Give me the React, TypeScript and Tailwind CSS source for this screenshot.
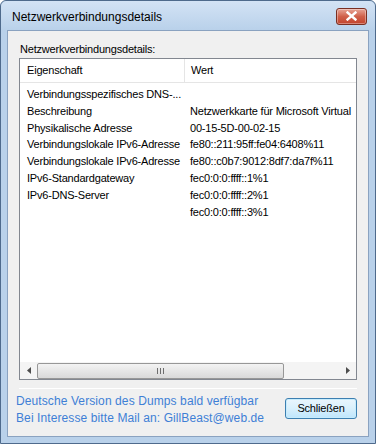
import React from 'react';

const rows: [string, string][] = [
  ['Verbindungsspezifisches DNS-...', ''],
  ['Beschreibung', 'Netzwerkkarte für Microsoft Virtual'],
  ['Physikalische Adresse', '00-15-5D-00-02-15'],
  ['Verbindungslokale IPv6-Adresse', 'fe80::211:95ff:fe04:6408%11'],
  ['Verbindungslokale IPv6-Adresse', 'fe80::c0b7:9012:8df7:da7f%11'],
  ['IPv6-Standardgateway', 'fec0:0:0:ffff::1%1'],
  ['IPv6-DNS-Server', 'fec0:0:0:ffff::2%1'],
  ['', 'fec0:0:0:ffff::3%1'],
];

function CloseButton() {
  return (
    <div className="w-[31px] h-[17px] rounded-[3px] border border-[#7a2f22] bg-gradient-to-b from-[#e7a597] via-[#d0604a] to-[#c2432c] flex items-center justify-center shadow-[inset_0_0_0_1px_rgba(255,255,255,0.35)]">
      <svg width="11" height="10" viewBox="0 0 11 10">
        <path d="M1.5 1.5 L9.5 8.5 M9.5 1.5 L1.5 8.5" stroke="#ffffff" strokeWidth="2.4" strokeLinecap="square" />
      </svg>
    </div>
  );
}

function Arrow({ dir }: { dir: 'left' | 'right' }) {
  return (
    <div className="w-[17px] h-full flex items-center justify-center">
      <svg width="4" height="7" viewBox="0 0 4 7">
        {dir === 'left' ? <path d="M4 0 L0 3.5 L4 7 Z" fill="#4d4d4d" /> : <path d="M0 0 L4 3.5 L0 7 Z" fill="#4d4d4d" />}
      </svg>
    </div>
  );
}

export default function App() {
  return (
    <div className="w-[376px] h-[444px] bg-[#b9d1ea] border border-[#4e6a8c] rounded-t-[6px] flex flex-col text-[11px] tracking-[-0.2px] text-black" style={{ fontFamily: '"Segoe UI", "Liberation Sans", Arial, sans-serif' }}>
      {/* title bar */}
      <div className="h-[29px] flex items-center justify-between pl-[11px] pr-[8px] bg-gradient-to-b from-[#d3e3f5] to-[#b9d1ea] rounded-t-[6px]">
        <span className="text-[12px] tracking-[0px] text-black pt-[2px]">Netzwerkverbindungsdetails</span>
        <div className="pt-[1px]">
          <CloseButton />
        </div>
      </div>

      {/* client area */}
      <div className="mx-[6px] mb-[6px] flex-1 bg-[#f0f0f0] border border-[#8aa2c0] flex flex-col px-[11px]">
        <div className="pt-[10px] h-[27px] pl-[1px]">Netzwerkverbindungsdetails:</div>

        <div className="h-[322px] border border-[#828790] bg-white flex flex-col">
          <div className="h-[24px] flex border-b border-[#e5e5e5]">
            <div className="w-[165px] shrink-0 border-r border-[#e5e5e5] pl-[7px] flex items-center">Eigenschaft</div>
            <div className="pl-[6px] flex items-center">Wert</div>
          </div>

          <div className="flex-1 pt-[3px] leading-[16.8px]">
            {rows.map(([k, v], i) => (
              <div key={i} className="flex whitespace-nowrap">
                <div className="w-[165px] shrink-0 pl-[7px]">{k}</div>
                <div className="pl-[5px]">{v}</div>
              </div>
            ))}
          </div>

          <div className="h-[17px] bg-[#f4f4f4] flex items-center">
            <Arrow dir="left" />
            <div className="w-[247px] h-[16px] rounded-[2px] border border-[#979797] bg-gradient-to-b from-[#f3f3f3] to-[#d9d9d9] flex items-center justify-center">
              <svg width="7" height="6" viewBox="0 0 7 6">
                <path d="M0.5 0 V6 M3.5 0 V6 M6.5 0 V6" stroke="#6d6d6d" strokeWidth="1" />
              </svg>
            </div>
            <div className="flex-1" />
            <Arrow dir="right" />
          </div>
        </div>

        <div className="mt-[8px] h-[1px] bg-[#a0a0a0] border-b border-white" />

        <div className="flex items-start justify-between pt-[3px]">
          <div className="text-[#3e7fd6] text-[12px] tracking-[0.1px] leading-[17px] -ml-[3px] pt-[1px]" style={{ fontFamily: '"Comic Sans MS", "Liberation Sans", sans-serif' }}>
            <div>Deutsche Version des Dumps bald verfügbar</div>
            <div>Bei Interesse bitte Mail an: GillBeast@web.de</div>
          </div>
          <div className="mt-[6px] w-[72px] h-[21px] rounded-[3px] border border-[#3c7fb1] bg-gradient-to-b from-[#eaf6fd] via-[#d9f0fc] to-[#bee6fd] flex items-center justify-center shadow-[inset_0_0_0_1px_#c7ecfc]">
            Schließen
          </div>
        </div>
      </div>
    </div>
  );
}
